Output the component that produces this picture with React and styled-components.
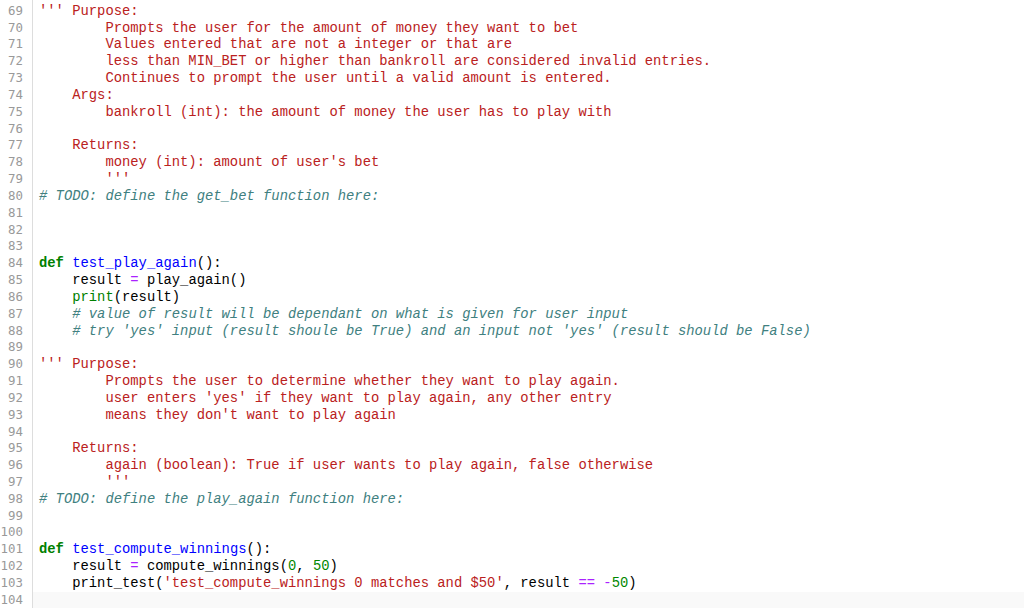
import React from "react";
import styled, { createGlobalStyle } from "styled-components";

const GlobalStyle = createGlobalStyle`
  html, body {
    margin: 0;
    padding: 0;
    background: #ffffff;
  }
`;

const LINE_HEIGHT = "16.83px";

const Editor = styled.div`
  display: flex;
  width: 1024px;
  height: 608px;
  overflow: hidden;
  background: #ffffff;
`;

const Gutter = styled.div`
  display: flex;
  flex-direction: column;
  width: 33px;
  box-sizing: border-box;
  padding-top: 2.8px;
  border-right: 1px solid #dddddd;
  flex-shrink: 0;
`;

const LineNumber = styled.div`
  height: ${LINE_HEIGHT};
  line-height: ${LINE_HEIGHT};
  padding-right: 9px;
  text-align: right;
  font-family: "DejaVu Sans Mono", "Liberation Mono", monospace;
  font-size: 12.4px;
  color: #999999;
`;

const Code = styled.div`
  display: flex;
  flex-direction: column;
  flex: 1;
  padding-top: 2.8px;
`;

const Line = styled.div`
  height: ${LINE_HEIGHT};
  line-height: ${LINE_HEIGHT};
  padding-left: 6px;
  white-space: pre;
  font-family: "Liberation Mono", "Courier New", monospace;
  font-size: 13.83px;
  color: #000000;
  background: ${(p) => (p.$active ? "#f9f9f9" : "transparent")};
`;

const Token = styled.span`
  color: ${(p) =>
    ({
      str: "#ba2121",
      com: "#408080",
      kw: "#008000",
      def: "#0000ff",
      bi: "#008000",
      num: "#008800",
      op: "#aa22ff",
    })[p.$kind] || "#000000"};
  font-style: ${(p) => (p.$kind === "com" ? "italic" : "normal")};
  font-weight: ${(p) => (p.$kind === "kw" ? "bold" : "normal")};
`;

const s = (t) => ["str", t];
const c = (t) => ["com", t];
const k = (t) => ["kw", t];
const d = (t) => ["def", t];
const b = (t) => ["bi", t];
const n = (t) => ["num", t];
const o = (t) => ["op", t];
const p = (t) => ["", t];

const lines = [
  [s("''' Purpose:")],
  [s("        Prompts the user for the amount of money they want to bet")],
  [s("        Values entered that are not a integer or that are")],
  [s("        less than MIN_BET or higher than bankroll are considered invalid entries.")],
  [s("        Continues to prompt the user until a valid amount is entered.")],
  [s("    Args:")],
  [s("        bankroll (int): the amount of money the user has to play with")],
  [],
  [s("    Returns:")],
  [s("        money (int): amount of user's bet")],
  [s("        '''")],
  [c("# TODO: define the get_bet function here:")],
  [],
  [],
  [],
  [k("def"), p(" "), d("test_play_again"), p("():")],
  [p("    result "), o("="), p(" play_again()")],
  [p("    "), b("print"), p("(result)")],
  [p("    "), c("# value of result will be dependant on what is given for user input")],
  [p("    "), c("# try 'yes' input (result shoule be True) and an input not 'yes' (result should be False)")],
  [],
  [s("''' Purpose:")],
  [s("        Prompts the user to determine whether they want to play again.")],
  [s("        user enters 'yes' if they want to play again, any other entry")],
  [s("        means they don't want to play again")],
  [],
  [s("    Returns:")],
  [s("        again (boolean): True if user wants to play again, false otherwise")],
  [s("        '''")],
  [c("# TODO: define the play_again function here:")],
  [],
  [],
  [k("def"), p(" "), d("test_compute_winnings"), p("():")],
  [p("    result "), o("="), p(" compute_winnings("), n("0"), p(", "), n("50"), p(")")],
  [
    p("    print_test("),
    s("'test_compute_winnings 0 matches and $50'"),
    p(", result "),
    o("=="),
    p(" "),
    o("-"),
    n("50"),
    p(")"),
  ],
  [],
];

const FIRST = 69;

export default function App() {
  return (
    <>
      <GlobalStyle />
      <Editor>
        <Gutter>
          {lines.map((_, i) => (
            <LineNumber key={i}>{FIRST + i}</LineNumber>
          ))}
        </Gutter>
        <Code>
          {lines.map((tokens, i) => (
            <Line key={i} $active={i === lines.length - 1}>
              {tokens.length === 0
                ? " "
                : tokens.map(([kind, text], j) => (
                    <Token key={j} $kind={kind}>
                      {text}
                    </Token>
                  ))}
            </Line>
          ))}
        </Code>
      </Editor>
    </>
  );
}
